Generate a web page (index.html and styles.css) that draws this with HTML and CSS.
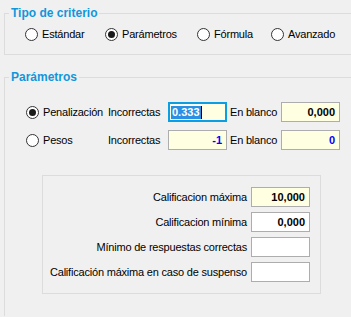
FILE: index.html
```html
<!DOCTYPE html>
<html lang="es">
<head>
<meta charset="utf-8">
<link rel="stylesheet" href="styles.css">
</head>
<body>
<fieldset class="group group-tipo">
  <legend>Tipo de criterio</legend>
  <div class="tipo-row">
    <label class="radio"><span class="dot"></span>Estándar</label>
    <label class="radio"><span class="dot checked"></span>Parámetros</label>
    <label class="radio"><span class="dot"></span>Fórmula</label>
    <label class="radio"><span class="dot"></span>Avanzado</label>
  </div>
</fieldset>
<fieldset class="group group-param">
  <legend>Parámetros</legend>
  <div class="param-grid">
    <label class="radio"><span class="dot checked"></span>Penalización</label>
    <span class="lbl">Incorrectas</span>
    <div class="field focus"><span class="sel">0.333</span><span class="caret"></span></div>
    <span class="lbl lbl-blanco">En blanco</span>
    <div class="field yellow">0,000</div>
    <label class="radio"><span class="dot"></span>Pesos</label>
    <span class="lbl">Incorrectas</span>
    <div class="field yellow blue">-1</div>
    <span class="lbl lbl-blanco">En blanco</span>
    <div class="field yellow blue">0</div>
  </div>
  <div class="limits">
    <div class="limit-row"><span>Calificacion máxima</span><div class="field yellow">10,000</div></div>
    <div class="limit-row"><span>Calificacion mínima</span><div class="field">0,000</div></div>
    <div class="limit-row"><span>Mínimo de respuestas correctas</span><div class="field"></div></div>
    <div class="limit-row"><span>Calificación máxima en caso de suspenso</span><div class="field"></div></div>
  </div>
</fieldset>
</body>
</html>
```
FILE: styles.css
```css
html, body {
  margin: 0;
  background: #f0f0f0;
}
body {
  font: 11px/13px "Liberation Sans", Tahoma, sans-serif;
  letter-spacing: -0.2px;
  color: #000;
  width: 351px;
  height: 317px;
  overflow: hidden;
}
.group {
  border: 1px solid #dcdcdc;
  border-right: none;
  margin: 0 0 0 4px;
  padding: 0 4px;
  min-width: 0;
}
.group legend {
  padding: 0 2px;
  font: bold 12px/14px "Liberation Sans", sans-serif;
  letter-spacing: 0;
  color: #1296db;
}
.group-tipo {
  margin-top: 6px;
  padding-bottom: 12px;
}
.tipo-row {
  display: grid;
  grid-template-columns: 80px 92px 74px auto;
  align-items: center;
  height: 16px;
  padding: 6px 0 0 16px;
}
.radio {
  display: flex;
  align-items: center;
  gap: 4px;
  white-space: nowrap;
}
.dot {
  box-sizing: border-box;
  width: 13px;
  height: 13px;
  border: 1px solid #333;
  border-radius: 50%;
  background: #fff;
  display: grid;
  place-items: center;
  flex: none;
}
.dot.checked::after {
  content: "";
  width: 7px;
  height: 7px;
  border-radius: 50%;
  background: #1a1a1a;
}
.group-param {
  margin-top: 15px;
  border-bottom: none;
  height: 246px;
  box-sizing: border-box;
}
.param-grid {
  display: grid;
  grid-template-columns: 82px 60px 59px 54px 59px;
  grid-auto-rows: 20px;
  row-gap: 8px;
  align-items: center;
  padding: 18px 0 0 17px;
}
.lbl {
  white-space: nowrap;
}
.lbl-blanco {
  padding-left: 3px;
}
.field {
  box-sizing: border-box;
  width: 59px;
  height: 20px;
  border: 1px solid #adadad;
  background: #fff;
  font-weight: bold;
  letter-spacing: 0;
  text-align: right;
  padding: 0 4px;
  line-height: 18px;
}
.yellow {
  background: #ffffe1;
}
.blue {
  color: #0000ff;
}
.field.focus {
  border: 2px solid #0a9fe4;
  display: flex;
  align-items: center;
  padding: 0 1px;
  background: #ffffe1;
}
.sel {
  background: #2b8fe3;
  color: #fff;
  line-height: 13px;
  padding: 0 1px;
}
.caret {
  width: 1px;
  height: 13px;
  background: #000;
}
.limits {
  box-sizing: border-box;
  width: 279px;
  margin: 25px 0 0 33px;
  border: 1px solid #dcdcdc;
  padding: 11px 10px 11px 0;
  display: flex;
  flex-direction: column;
  gap: 5px;
}
.limit-row {
  display: flex;
  justify-content: flex-end;
  align-items: center;
  gap: 4px;
  white-space: nowrap;
}
```
